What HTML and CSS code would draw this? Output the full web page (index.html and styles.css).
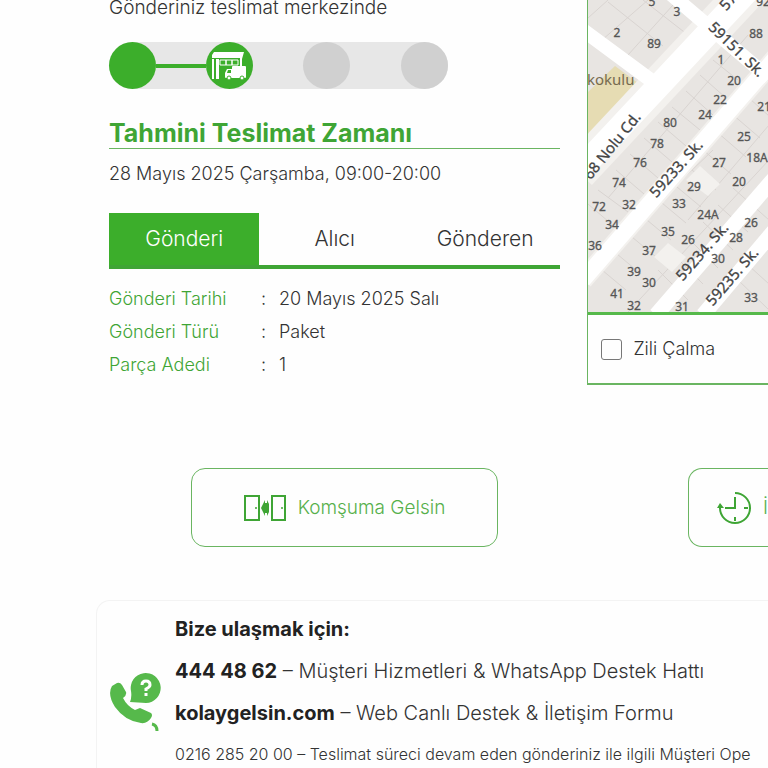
FILE: index.html
```html
<!DOCTYPE html>
<html lang="tr">
<head>
    <meta charset="UTF-8">
    <meta name="viewport" content="width=device-width, initial-scale=1.0">
    <title>Gönderi Takip</title>
    <link rel="stylesheet" href="styles.css">
</head>
<body>
    <main class="page">
        <div class="tracking">
            <section class="shipment">
                <p class="status">Gönderiniz teslimat merkezinde</p>
                <div class="steps">
                    <span class="step done"></span>
                    <span class="line"></span>
                    <span class="step done">
                        <svg viewBox="0 0 47 47" width="47" height="47">
                            <path fill="#fff" d="M6 13 L8 10 H38 L36 17 V24 H34 V16 H6 Z"/>
                            <path fill="#fff" d="M6 17 h2 v20 h-2 z M10 17 h3 v20 h-3 z"/>
                            <path fill="none" stroke="#fff" stroke-width="1" d="M14 18 h6 v5 h-6 z M20 18 h6 v5 h-6 z M26 18 h6 v5 h-6 z"/>
                            <path fill="#fff" d="M26 25 q0-1 1-1 h12 q1 0 1 1 v10 q0 1-1 1 h-19 q-1 0-1-1 v-4 l2-4 h5 z"/>
                            <path fill="#3cae2b" d="M22 28 h3 v3 h-4 z"/>
                            <circle cx="23" cy="36" r="2" fill="#fff" stroke="#3cae2b"/>
                            <circle cx="36" cy="36" r="2" fill="#fff" stroke="#3cae2b"/>
                        </svg>
                    </span>
                    <span class="line empty"></span>
                    <span class="step"></span>
                    <span class="line empty"></span>
                    <span class="step"></span>
                </div>

                <h2 class="title">Tahmini Teslimat Zamanı</h2>
                <p class="date">28 Mayıs 2025 Çarşamba, 09:00-20:00</p>

                <div class="tabs">
                    <button type="button" class="tab active">Gönderi</button>
                    <button type="button" class="tab">Alıcı</button>
                    <button type="button" class="tab">Gönderen</button>
                </div>
                <table class="details">
                    <tr><th>Gönderi Tarihi</th><td class="colon">:</td><td>20 Mayıs 2025 Salı</td></tr>
                    <tr><th>Gönderi Türü</th><td class="colon">:</td><td>Paket</td></tr>
                    <tr><th>Parça Adedi</th><td class="colon">:</td><td>1</td></tr>
                </table>
            </section>

            <section class="location">
                <svg class="map" viewBox="0 0 181 312" preserveAspectRatio="xMinYMin slice">
                    <rect width="181" height="312" fill="#e8e5e2"/>
                    <path fill="#e6dcb3" d="M0 92 L27 66 L54 86 L0 142 Z"/>
                    <!-- parsel sınırları -->
                    <g stroke="#d9d4d1" fill="none">
                        <path d="M0 18 L20 0 M14 40 L60 0 M40 55 L85 5 M20 2 L75 46 M55 0 L100 35"/>
                        <path d="M20 198 L160 35 M0 270 L125 150 M40 312 L181 160 M100 220 L181 125 M130 25 L181 75"/>
                        <path d="M125 60 L150 80 M112 75 L138 98 M98 91 L125 115 M84 107 L112 130 M70 122 L98 146 M56 138 L84 162 M42 154 L70 178 M28 170 L56 194 M10 190 L40 212 M0 204 L28 228"/>
                        <path d="M152 90 L181 116 M137 108 L172 138 M122 126 L158 157 M107 143 L143 174 M92 160 L128 190 M77 177 L113 207 M62 193 L98 223 M47 210 L83 240 M32 227 L68 257 M17 244 L53 274 M2 260 L38 290"/>
                        <path d="M145 188 L181 220 M130 205 L160 232 M115 222 L145 250 M100 238 L130 268 M85 254 L115 284 M70 270 L100 300 M160 265 L181 284 M148 278 L181 310"/>
                    </g>
                    <!-- yol kenarları -->
                    <g stroke="#f3f1ee" fill="none">
                        <path stroke-width="38" d="M-10 172 L165 -15"/>
                        <path stroke-width="20" d="M-5 280 L190 55"/>
                        <path fill="#f3f1ee" stroke="none" d="M66 257 L80 243 L98 257 L84 272 Z M98 180 L112 166 L132 184 L120 196 Z"/>
                    </g>
                    <g stroke="#fff" fill="none">
                        <path stroke-width="14" d="M-5 30 L68 84 M78 -10 L181 78"/>
                        <path stroke-width="24" d="M-10 172 L165 -15"/>
                        <path stroke-width="16" d="M-5 280 L190 55"/>
                        <path stroke-width="15" d="M68 315 L195 168"/>
                        <path stroke-width="15" d="M115 315 L195 220"/>
                    </g>
                    <g class="house-no">
                        <text x="64" y="6">5</text><text x="89" y="16">3</text><text x="29" y="37">2</text>
                        <text x="66" y="48">89</text><text x="175" y="6">92</text><text x="168" y="38">88</text>
                        <text x="133" y="64">1</text><text x="146" y="85">20</text><text x="132" y="104">22</text>
                        <text x="117" y="119">24</text><text x="176" y="111">21</text><text x="82" y="127">80</text>
                        <text x="69" y="148">78</text><text x="156" y="141">25</text><text x="169" y="162">18A</text>
                        <text x="52" y="167">76</text><text x="131" y="167">27</text><text x="31" y="187">74</text>
                        <text x="106" y="191">29</text><text x="151" y="186">20</text><text x="11" y="211">72</text>
                        <text x="41" y="209">32</text><text x="91" y="208">33</text><text x="120" y="219">24A</text>
                        <text x="24" y="229">34</text><text x="163" y="227">26</text><text x="80" y="236">35</text>
                        <text x="100" y="244">26</text><text x="148" y="242">28</text><text x="7" y="250">36</text>
                        <text x="61" y="255">37</text><text x="130" y="263">30</text><text x="46" y="276">39</text>
                        <text x="61" y="287">30</text><text x="29" y="298">41</text><text x="46" y="310">32</text>
                        <text x="94" y="311">31</text><text x="163" y="302">33</text>
                    </g>
                    <g class="street">
                        <text transform="translate(28 149) rotate(-51)">68 Nolu Cd.</text>
                        <text transform="translate(92 172) rotate(-48)">59233. Sk.</text>
                        <text transform="translate(118 255) rotate(-49)">59234. Sk.</text>
                        <text transform="translate(148 280) rotate(-49)">59235. Sk.</text>
                        <text transform="translate(145 53) rotate(44)">59151. Sk.</text>
                        <text transform="translate(144 5) rotate(-49)">57</text>
                    </g>
                    <text class="place" x="-1" y="85">kokulu</text>
                </svg>
                <label class="bell"><input type="checkbox"> Zili Çalma</label>
            </section>
        </div>

        <div class="actions">
            <button type="button" class="action">
                <svg viewBox="0 0 42 26" width="42" height="26">
                    <path fill="none" stroke="#3fa535" stroke-width="2" d="M1 1 H15 V25 H1 Z M28 1 H41 V25 H28 Z"/>
                    <circle cx="12" cy="13" r="1" fill="#3fa535"/>
                    <circle cx="38" cy="13" r="1" fill="#3fa535"/>
                    <path fill="#3fa535" d="M17 13 L21 5 V8 H23 V5 L25 9 V17 L23 21 V18 H21 V21 Z"/>
                </svg>
                Komşuma Gelsin
            </button>
            <button type="button" class="action cut">
                <svg viewBox="0 0 34 34" width="34" height="34">
                    <path fill="none" stroke="#3fa535" stroke-width="2" d="M18 2 A15 15 0 1 1 3 17 M18 6 V17 H8 M27 17 H31 M18 26 V30"/>
                    <path fill="#3fa535" d="M0 17 L3 12 L7 17 Z"/>
                </svg>
                İ
            </button>
        </div>

        <div class="contact">
            <svg class="phone" viewBox="0 0 54 60" width="54" height="60">
                <path fill="#56b94b" d="M3 13 L8 10 Q11 9 13 12 L17 19 Q18 22 14 25 Q18 33 26 37 L31 35 L42 40 Q44 42 42 45 Q38 51 32 50 Q16 48 6 34 Q-2 21 3 13 Z"/>
                <path fill="#56b94b" d="M21 29 Q23 24 22 18 A15 15 0 1 1 37 30 Z"/>
                <path fill="none" stroke="#56b94b" stroke-width="3" d="M43 51 Q48 52 48 58"/>
                <path fill="none" stroke="#fff" stroke-width="3" d="M33 12 Q33 8 37 8 Q41 8 41 12 Q41 14 37 16 V18 M37 20 V23"/>
            </svg>
            <div class="lines">
                <p><b>Bize ulaşmak için:</b></p>
                <p><b>444 48 62</b> – Müşteri Hizmetleri &amp; WhatsApp Destek Hattı</p>
                <p><b>kolaygelsin.com</b> – Web Canlı Destek &amp; İletişim Formu</p>
                <p class="small">0216 285 20 00 – Teslimat süreci devam eden gönderiniz ile ilgili Müşteri Ope</p>
            </div>
        </div>
    </main>
</body>
</html>
```
FILE: styles.css
```css
* {
    box-sizing: border-box;
}
body {
    margin: 0;
    background-color: #fefefe;
    color: #333;
    font-family: "Inter", sans-serif;
    font-size: 18px;
    font-weight: 300;
    line-height: 24px;
    overflow: hidden;
}
p, h2 {
    margin: 0;
}
button {
    font: inherit;
    color: inherit;
    cursor: pointer;
}
.tracking {
    display: grid;
    grid-template-columns: 5fr 2fr;
    gap: 27px;
    align-items: start;
    padding-left: 109px;
}
.status {
    height: 42px;
    font-size: 19px;
    line-height: 16px;
}
.steps {
    display: flex;
    align-items: center;
    width: 75%;
    height: 47px;
    border-radius: 24px;
    background-color: #e7e7e7;
}
.step {
    width: 47px;
    height: 47px;
    border-radius: 50%;
    background-color: #d0d0d0;
}
.step svg {
    display: block;
}
.step.done {
    background-color: #3cae2b;
}
.line {
    flex: 1;
    height: 4px;
    background-color: #3cae2b;
}
.line.empty {
    background-color: transparent;
}
.title {
    margin-top: 30px;
    border-bottom: 1px solid #6ab561;
    color: #3fa535;
    font-size: 25px;
    font-weight: 700;
    line-height: 29px;
}
.date {
    margin-top: 13px;
}
.tabs {
    display: grid;
    grid-template-columns: repeat(3, 1fr);
    margin-top: 27px;
    border-bottom: 4px solid #3fa535;
}
.tab {
    padding: 14px 0;
    border: none;
    background-color: transparent;
    font-size: 21px;
}
.tab.active {
    background-color: #3cae2b;
    color: #fff;
}
.details {
    margin-top: 13px;
    border-collapse: collapse;
}
.details th, .details td {
    height: 33px;
    padding: 0;
    font-weight: 300;
    text-align: left;
}
.details th {
    width: 152px;
    color: #3fa535;
}
.details .colon {
    width: 18px;
}
.location {
    border-left: 1px solid #6ab561;
    border-bottom: 2px solid #6ab561;
}
.map {
    display: block;
    width: 100%;
    height: 312px;
}
.house-no {
    fill: #555;
    stroke: #555;
    stroke-width: 0.3px;
    font: 12px "Noto Sans", sans-serif;
    text-anchor: middle;
}
.street, .place {
    fill: #444;
    font: 15px "Noto Sans", sans-serif;
    text-anchor: middle;
}
.street {
    stroke: #444;
    stroke-width: 0.3px;
}
.place {
    fill: #776b50;
    text-anchor: start;
}
.bell {
    display: flex;
    align-items: center;
    gap: 11px;
    height: 71px;
    padding-left: 13px;
    border-top: 3px solid #56b94b;
}
.bell input {
    appearance: none;
    width: 21px;
    height: 21px;
    margin: 0;
    border: 1px solid #777;
    border-radius: 3px;
}
.actions {
    display: grid;
    grid-template-columns: 307px 1fr;
    gap: 190px;
    margin-top: 83px;
    padding-left: 191px;
}
.action {
    display: flex;
    align-items: center;
    justify-content: center;
    gap: 12px;
    height: 79px;
    padding: 0;
    border: 1px solid #6ab561;
    border-radius: 14px;
    background-color: transparent;
    color: #56b04b;
    font-size: 19px;
}
.action.cut {
    justify-content: flex-start;
    padding-left: 28px;
    border-right: none;
    border-radius: 14px 0 0 14px;
}
.contact {
    display: flex;
    gap: 12px;
    margin: 53px 0 0 96px;
    padding: 16px 0 20px 12px;
    border: 1px solid #f3f3f3;
    border-right: none;
    border-radius: 14px 0 0 0;
}
.phone {
    flex: none;
    margin-top: 56px;
}
.lines {
    display: grid;
    gap: 18px;
    font-size: 20px;
    white-space: nowrap;
}
.lines b {
    color: #222;
    font-weight: 700;
}
.lines .small {
    font-size: 16px;
    line-height: 22px;
}
```
